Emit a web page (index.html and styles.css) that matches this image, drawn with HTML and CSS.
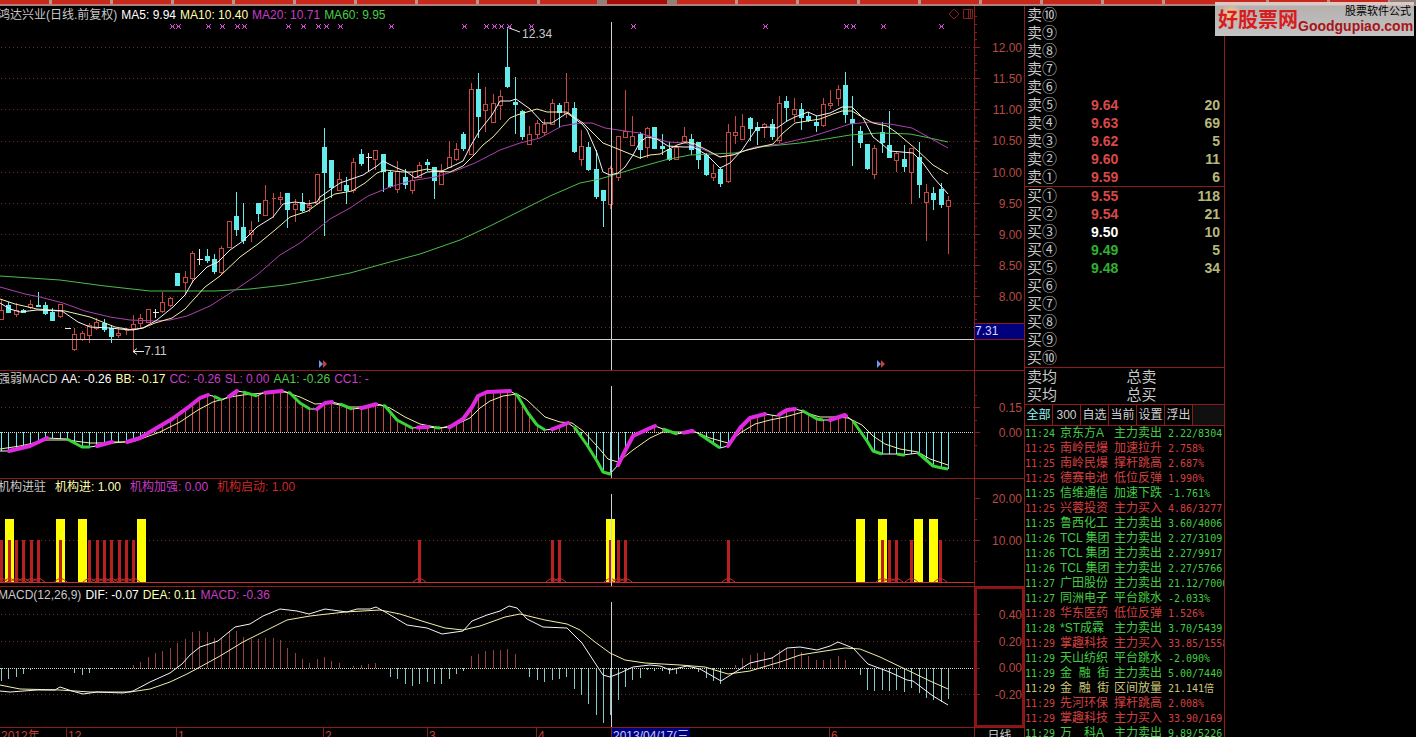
FILE: index.html
```html
<!DOCTYPE html>
<html lang="zh-CN">
<head>
<meta charset="utf-8">
<title>鸿达兴业 日线</title>
<link rel="stylesheet" href="styles.css">
</head>
<body>
<div class="strip">
  <div class="strip-left"></div><div class="strip-active"></div><div class="strip-right"></div><div class="strip-far"></div>
</div>
<main class="workspace">
  <div class="charts">
    <section class="panel">
      <svg class="plot" id="candles" viewBox="0 6 974 364" preserveAspectRatio="none"></svg>
      <header class="legend legend-top">
        <span class="grey">鸿达兴业(日线.前复权)</span><span class="white">MA5: 9.94</span><span class="yellow">MA10: 10.40</span><span class="magenta">MA20: 10.71</span><span class="green">MA60: 9.95</span>
        <svg class="tools" width="24" height="12" viewBox="0 0 24 12"><path d="M5 1 10 6 5 11 0 6zM14.500 1.500h9v9h-9zM19.500 1.500v9M21.500 1.500v9"/></svg>
      </header>
      <span class="mark high">12.34</span>
      <span class="mark low">7.11</span>
    </section>
    <div class="axis">
      <svg class="plot" id="axis1" viewBox="974 6 50 364" preserveAspectRatio="none"></svg>
      <div class="ticks ticks-price"><span>12.00</span><span>11.50</span><span>11.00</span><span>10.50</span><span>10.00</span><span>9.50</span><span>9.00</span><span>8.50</span><span>8.00</span></div>
      <span class="cursor-price">7.31</span>
    </div>

    <section class="panel">
      <svg class="plot" id="strength" viewBox="0 371 974 107" preserveAspectRatio="none"></svg>
      <header class="legend"><span class="grey">强弱MACD</span><span class="white">AA: -0.26</span><span class="yellow">BB: -0.17</span><span class="magenta">CC: -0.26</span><span class="magenta">SL: 0.00</span><span class="green">AA1: -0.26</span><span class="magenta">CC1: -</span></header>
    </section>
    <div class="axis">
      <svg class="plot" id="axis2" viewBox="974 371 50 107" preserveAspectRatio="none"></svg>
      <div class="ticks ticks-strength"><span>0.15</span><span>0.00</span></div>
    </div>

    <section class="panel">
      <svg class="plot" id="inst" viewBox="0 479 974 107" preserveAspectRatio="none"></svg>
      <header class="legend legend-wide"><span class="grey">机构进驻</span><span class="yellow">机构进: 1.00</span><span class="magenta">机构加强: 0.00</span><span class="red">机构启动: 1.00</span></header>
    </section>
    <div class="axis">
      <svg class="plot" id="axis3" viewBox="974 479 50 107" preserveAspectRatio="none"></svg>
      <div class="ticks ticks-inst"><span>20.00</span><span>10.00</span></div>
    </div>

    <section class="panel">
      <svg class="plot" id="macd" viewBox="0 587 974 140" preserveAspectRatio="none"></svg>
      <header class="legend"><span class="grey">MACD(12,26,9)</span><span class="white">DIF: -0.07</span><span class="yellow">DEA: 0.11</span><span class="magenta">MACD: -0.36</span></header>
    </section>
    <div class="axis axis-selected">
      <svg class="plot" id="axis4" viewBox="974 587 50 140" preserveAspectRatio="none"></svg>
      <div class="ticks ticks-macd"><span>0.40</span><span>0.20</span><span>0.00</span><span>-0.20</span></div>
    </div>

    <div class="dates"><span>2012年</span><span>12</span><span>1</span><span>2</span><span>3</span><span>4</span><span class="cursor-date">2013/04/17(三</span><span class="rest"></span><span>6</span></div>
    <div class="period">日线</div>
  </div>

  <aside class="quotes">
    <table class="book" id="sell"></table>
    <table class="book" id="buy"></table>
    <table class="book avg"><tr><th>卖均</th><th>总卖</th></tr><tr><th>买均</th><th>总买</th></tr></table>
    <nav class="tabs"><button class="on">全部</button><button>300</button><button>自选</button><button>当前</button><button>设置</button><button>浮出</button></nav>
    <div class="feed-box"><table class="feed" id="feed"></table></div>
  </aside>
  <div class="blank"></div>
</main>
<div class="brand">
  <span class="brand-cn">好股票网</span>
  <span class="brand-side"><span class="brand-sub">股票软件公式</span><span class="brand-en">Goodgupiao.com</span></span>
</div>
<script src="charts.js"></script>
</body>
</html>
```

FILE: styles.css
```css
* { box-sizing: border-box; }
html, body { height: 100%; }
body {
  margin: 0;
  background: #000;
  color: #c8c8c8;
  font: 12px/16px "Liberation Sans", "Noto Sans CJK SC", sans-serif;
  display: flex;
  flex-direction: column;
  overflow: hidden;
  position: relative;
}

/* top strip */
.strip { height: 6px; flex: none; display: grid; grid-template-columns: 607fr 60fr 541fr 208fr; border-bottom: 2px solid #b08078; background: #8d8078; }
.strip-left { background: repeating-linear-gradient(90deg, #c8281c 0 49px, #b9958c 49px 52px, #c8281c 52px 61px); margin-right: 10px; }
.strip-active { background: #a80c08; }
.strip-right { margin-left: 10px; background: repeating-linear-gradient(90deg, #c8281c 0 58px, #b9958c 58px 61px); }
.strip-far { background: repeating-linear-gradient(90deg, #c8281c 0 58px, #b9958c 58px 61px); margin-right: 26px; }

.workspace { flex: 1; min-height: 0; display: grid; grid-template-columns: minmax(0, 1024fr) 201px minmax(0, 191fr); grid-template-rows: minmax(0, 1fr); }
.charts { display: grid; grid-template-columns: minmax(0, 1fr) 50px; grid-template-rows: minmax(0, 365fr) minmax(0, 108fr) minmax(0, 108fr) minmax(0, 141fr) 9px; }

.panel, .axis { display: grid; grid-template: minmax(0, 1fr) / minmax(0, 1fr); border-bottom: 1px solid #8c1c1c; position: relative; }
.axis { border-left: 1px solid #8c1c1c; }
.panel > .plot, .panel > .legend, .axis > .plot, .axis > .ticks { grid-area: 1 / 1; }
.plot { display: block; width: 100%; height: 100%; }
.axis > .plot { width: 50px; margin-left: -1px; }
.axis-selected { box-shadow: inset 0 0 0 2px #8c1414; }

.legend { display: flex; gap: 4px; height: 16px; margin-left: -2px; white-space: nowrap; overflow: hidden; }
.legend-top { margin-top: 1px; }
.legend-wide { gap: 9px; }
.tools { margin: 1px 1px 0 auto; fill: none; stroke: #8c1c1c; }

.grey { color: #c8c8c8; }
.white { color: #fff; }
.yellow { color: #ffffb0; }
.magenta { color: #c83cc8; }
.green { color: #4ccc4c; }
.red { color: #d02828; }

.mark { position: absolute; }
.high { left: 53.600%; top: 5.500%; }
.low { left: 14.800%; top: 92.600%; }

.ticks { display: flex; flex-direction: column; justify-content: space-between; align-items: flex-end; color: #b84a44; padding-right: 2px; }
.ticks-price { padding-top: 34px; padding-bottom: 65px; }
.ticks-strength { padding-top: 29px; padding-bottom: 37px; }
.ticks-inst { padding-top: 12px; padding-bottom: 37px; }
.ticks-macd { padding-top: 20px; padding-bottom: 24px; }
.cursor-price { position: absolute; left: 0; right: 0; top: 87%; height: 17px; background: #00007c; border: solid #8c1c1c; border-width: 1px 0; color: #d8d8ff; line-height: 15px; }

.dates { display: grid; grid-template-columns: 66fr 110fr 147fr 104fr 109fr 75fr 79fr 139fr 145fr; overflow: hidden; color: #c04038; white-space: nowrap; }
.dates span { border-left: 1px solid #8c1c1c; padding-left: 1px; }
.dates span:first-child, .dates .rest { border-left: 0; }
.dates .cursor-date { background: #00007c; color: #c8c8ff; overflow: hidden; }
.period { border-left: 1px solid #8c1c1c; text-align: center; overflow: hidden; }

/* order book */
.quotes { border-left: 1px solid #8c1c1c; border-right: 1px solid #8c1c1c; display: flex; flex-direction: column; min-height: 0; }
.book { width: 100%; border-collapse: collapse; table-layout: fixed; border-bottom: 1px solid #8c1c1c; flex: none; }
.book th, .book td { height: 18px; padding: 0; line-height: 18px; }
.book th { width: 66px; padding-left: 2px; font-size: 15px; font-weight: normal; text-align: left; }
.book td { font-size: 14px; font-weight: bold; }
.book .qty { text-align: right; color: #b8b87c; padding-right: 4px; }
.book .up { color: #d84848; }
.book .flat { color: #fff; }
.book .down { color: #30b030; }
.avg th { width: 50%; }

.tabs { display: flex; height: 21px; flex: none; border-bottom: 1px solid #8c1c1c; background: #101010; }
.tabs button { margin: 0; padding: 0 1px; width: 28px; border: 0; border-right: 1px solid #8c1c1c; background: #000; color: #d0d0d0; font: 12px/18px "Liberation Sans", "Noto Sans CJK SC", sans-serif; }
.tabs .on { color: #90f4f4; }

.feed-box { flex: 1; min-height: 0; overflow: hidden; }
.feed { border-collapse: collapse; table-layout: fixed; width: 199px; white-space: pre; }
.feed td { padding: 0; height: 15px; line-height: 15px; overflow: hidden; }
.feed .t { width: 35px; }
.feed .n { width: 54px; }
.feed .a { width: 54px; }
.feed .t, .feed .v { font-family: "DejaVu Sans Mono", "Noto Sans CJK SC", monospace; font-size: 10px; }
.feed .r { color: #d44040; }
.feed .g { color: #44cc44; }
.feed .y { color: #c8c87c; }

/* corner badge */
.brand { position: absolute; top: 2px; right: 2px; width: 199px; height: 34px; padding: 0 0 0 3px; display: flex; align-items: center; background: radial-gradient(circle at 16px 12px, #e8c090 0 4px, transparent 11px), linear-gradient(#dcc8c4 0 3px, #b4b0ae 4px, #c4c4c4); white-space: nowrap; }
.brand-cn { font: bold 20px/30px "Noto Sans CJK SC", sans-serif; color: #d81c20; }
.brand-side { display: flex; flex-direction: column; align-items: flex-end; }
.brand-sub { font-size: 11px; line-height: 14px; padding-right: 2px; color: #000; }
.brand-en { font: bold 14px/16px "Liberation Sans", sans-serif; color: #a81418; }

/* plot marks */
.plot * { fill: none; vector-effect: non-scaling-stroke; }
.plot .crisp { shape-rendering: crispEdges; }
.plot .grid { stroke: #6c2c18; stroke-dasharray: 1 3; }
.plot .zero { stroke: #d8d8c8; stroke-dasharray: 1 1; }
.plot .rise { stroke: #c84844; }
.plot .body-rise { stroke: #c84844; fill: #000; }
.plot .fall { stroke: #64ecec; }
.plot .body-fall { fill: #64ecec; stroke: none; }
.plot .doji { stroke: #e8e8e8; }
.plot .cross { stroke: #d0d0d0; }
.plot .l-white { stroke: #f4f4f4; }
.plot .l-yellow { stroke: #f0f0a8; }
.plot .l-magenta { stroke: #b040b0; }
.plot .l-green { stroke: #4cbc4c; }
.plot .strong { stroke: #e028e0; stroke-width: 4; stroke-linecap: round; stroke-linejoin: round; }
.plot .weak { stroke: #38d438; stroke-width: 3; stroke-linejoin: round; }
.plot .x { stroke: #d848d8; }
.plot .bar-y { fill: #ffff00; }
.plot .bar-r { fill: #b82020; }
.plot .hist-r { stroke: #984040; }
.plot .hist-c { stroke: #88c8c8; }
.plot .axis-line { stroke: #8c1c1c; }
.plot .base { stroke: #c83030; }
.plot .arrow-blue { fill: #6c98f0; }
.plot .arrow-red { fill: #c83c3c; }
```

FILE: charts.js
```js
const NS = 'http://www.w3.org/2000/svg';
const at = i => Math.floor(1.5 + 7.34 * i) + 0.5;
const byId = id => document.getElementById(id);
function add(svg, d, cls) {
  const p = document.createElementNS(NS, 'path');
  p.setAttribute('d', d);
  p.setAttribute('class', cls);
  svg.appendChild(p);
}
const nums = s => s.trim().split(/[\s,]+/).map(Number);
function pairs(s) {
  const n = nums(s), out = [];
  for (let i = 0; i < n.length; i += 2) out.push([n[i], n[i + 1]]);
  return out;
}
const path = pts => 'M' + pts.map(p => p.join(' ')).join('L');
const line = (svg, s, cls) => add(svg, path(pairs(s)), cls);
const grid = (svg, ys) => ys.forEach(y => add(svg, `M1 ${y}.5H974`, 'grid crisp'));

/* price panel: direction, high, body top, body bottom, low */
const bars = `u299 310 319 319;d302 305 312 312;u303 310 314 317;d309 310 312 312;u300 304 307 309;d292 305 306 306;d302 305 313 314;d308 312 320 320;u304 304 316 318;w328 328 328 329;u328 334 349 351;u331 333 339 341;u323 325 335 343;u318 322 328 330;d319 323 329 331;d325 328 336 342;u329 333 335 338;u328 330 330 335;u315 324 328 352;u314 318 323 329;u309 309 322 322;w309 312 313 318;u292 302 311 313;u297 298 305 307;d273 273 285 285;u271 277 282 295;u251 253 278 283;w249 259 259 265;d249 256 260 262;d254 259 271 273;u246 248 272 275;u221 221 247 247;d192 216 229 235;d203 227 240 243;u221 230 234 242;d203 203 213 221;u185 200 215 216;u193 198 198 218;u192 197 199 205;d193 193 209 227;u199 204 209 222;d193 202 210 211;u200 205 207 212;u174 174 203 205;d128 147 172 235;d160 160 187 197;u172 179 190 191;d177 185 190 203;u158 162 190 193;d149 154 163 165;w153 157 157 171;u150 150 159 170;d154 154 171 191;d171 172 186 187;u161 171 189 193;d169 177 184 188;u172 180 190 194;u162 165 177 178;d159 162 164 170;d167 167 180 198;u164 172 184 185;u141 157 167 168;u143 149 159 161;d132 134 148 150;u83 89 154 155;d73 89 116 137;u87 104 110 132;u94 103 122 122;u90 96 105 120;d27 67 86 87;d77 102 104 133;d110 111 136 139;u126 134 144 145;u120 123 134 138;u119 124 132 135;u99 103 124 125;d103 105 112 127;u73 102 113 118;d102 108 151 152;u130 146 159 166;d142 147 169 170;d150 169 196 198;d190 190 200 226;u166 168 204 209;u136 136 177 181;u90 131 137 138;u116 136 145 146;d132 134 149 158;u127 128 147 158;d127 127 148 148;d134 146 148 154;d142 149 159 160;u146 147 159 160;u127 136 141 143;d134 139 149 154;d142 142 159 168;d153 155 174 175;u164 173 177 181;d168 169 183 186;u124 132 181 183;u116 132 135 144;u114 126 139 140;d117 118 128 140;d122 127 130 144;u123 124 127 138;d119 124 136 139;u96 103 140 143;d96 101 107 121;u98 109 114 122;d103 109 117 129;d112 116 120 121;d116 122 125 131;u98 104 125 127;u90 103 105 109;u85 89 98 106;d72 85 114 122;d96 119 123 165;d126 131 142 147;d144 144 168 169;u145 148 174 179;d122 132 142 152;d111 145 157 157;u152 153 160 172;d145 159 166 171;u148 148 172 204;d142 157 184 197;u184 192 202 241;d187 193 199 209;d183 189 204 207;u196 200 206 254`.split(';');
const c = byId('candles');
grid(c, [47, 78, 109, 141, 172, 203, 234, 265, 296, 327]);
bars.forEach((s, i) => {
  const kind = s[0], [hi, top, bot, lo] = nums(s.slice(1)), x = at(i);
  if (kind === 'w') { add(c, `M${x} ${hi}V${lo}M${x - 3} ${top + 0.5}h6`, 'doji crisp'); return; }
  if (kind === 'u') {
    add(c, `M${x} ${hi}V${lo}`, 'rise crisp');
    add(c, `M${x - 2} ${top + 0.5}h4V${bot + 0.5}h-4z`, 'body-rise crisp');
  } else {
    add(c, `M${x} ${hi}V${lo + 1}`, 'fall crisp');
    add(c, `M${x - 2.5} ${top}h5V${bot + 1}h-5z`, 'body-fall crisp');
  }
});
line(c, '0,276 60,280 105,286 150,291 215,291 250,289 285,285 320,279 350,273 390,262 420,254 460,240 490,226 520,211 550,196 580,183 600,179 640,167 665,160 690,155 735,153 760,147 800,143 820,140 850,135 880,133 910,134 925,137 948,142', 'l-green');
line(c, '0,287 25,294 40,297 63,303 85,311 110,317 130,320 155,321 170,320 187,316 210,306 235,290 257,275 280,255 300,243 330,219 350,208 368,196 390,187 410,181 435,177 455,171 475,163 500,150 520,143 540,138 562,126 580,123 592,123 605,128 625,131 640,133 652,137 668,142 685,143 700,148 720,157 735,154 755,147 780,144 810,137 835,129 850,124 870,122 890,124 912,128 930,138 948,148', 'l-magenta');
line(c, '0,299 15,304 37,309 65,311 90,317 115,327 133,330 143,328 155,323 172,318 185,309 205,287 220,276 240,257 258,244 275,230 290,217 308,211 320,202 335,194 352,191 365,183 377,173 385,170 403,172 413,172 427,169 437,171 450,172 463,166 475,154 483,145 493,137 502,127 510,118 517,115 537,109 547,112 567,112 583,123 603,143 613,147 640,158 650,155 660,154 677,145 687,142 695,144 707,150 720,157 733,155 747,150 773,144 783,133 795,123 820,119 833,114 842,111 852,111 862,117 873,123 887,126 897,133 917,150 933,165 948,174', 'l-yellow');
line(c, '0,303 10,309 20,312 37,310 62,311 78,322 90,327 110,328 130,330 143,328 157,320 173,307 185,295 193,281 207,267 218,262 230,250 243,241 257,227 273,217 283,204 295,202 308,204 317,202 320,197 340,183 363,175 377,166 383,161 397,168 407,172 415,178 427,172 442,171 457,164 463,161 470,147 480,130 492,115 500,101 510,101 516,99 530,109 543,123 552,123 567,113 582,124 587,130 597,153 603,172 610,175 618,173 625,167 633,155 640,142 647,137 657,139 668,146 683,147 693,147 707,155 720,168 730,163 742,150 757,128 768,127 777,128 787,121 795,117 803,114 808,112 817,116 830,113 842,107 852,107 863,118 873,137 882,144 890,151 913,153 923,163 933,177 948,194', 'l-white');
nums('172 178 208 222 237 244 288 303 318 326 340 391 464 486 494 501 509 531 633 765 846 853 883 941')
  .forEach(x => add(c, `M${x - 2} 24l5 5m0-5l-5 5M${x - 1} 26.500h3`, 'x'));
add(c, 'M509 28l11 4M133 351.500h11m-7-3l-4 3 4 3', 'doji');
add(c, 'M0 339.500H974M611.500 22V370', 'cross crisp');
[319, 877].forEach(x => {
  add(c, `M${x} 360l4 4-4 4z`, 'arrow-blue');
  add(c, `M${x + 4} 360l4 4-4 4z`, 'arrow-red');
});

/* strength panel */
const s = byId('strength');
grid(s, [407]);
const aa = pairs('0,451 9,451 30,446 47,438 67,439 82,447 90,447 97,446 112,442 127,442 140,438 155,429 172,419 190,406 200,398 208,395 213,396 222,400 230,396 237,391 243,392 257,396 263,393 282,391 290,393 300,403 310,409 317,409 325,403 332,402 340,404 352,409 362,408 377,404 385,406 397,420 412,428 427,427 440,428 450,427 463,419 472,407 478,396 487,392 510,391 517,395 528,413 537,425 545,430 553,429 568,423 575,428 587,445 597,461 603,472 610,474 618,465 625,451 633,436 648,429 655,426 663,429 677,434 692,431 698,433 720,448 728,446 740,428 750,418 765,414 777,416 787,410 795,409 803,411 817,419 823,420 830,420 845,415 853,421 867,441 873,451 882,454 897,454 903,455 918,453 933,466 942,468 948,469');
function valueAt(x) {
  for (let i = 1; i < aa.length; i++) {
    const [x0, y0] = aa[i - 1], [x1, y1] = aa[i];
    if (x <= x1) return y0 + (y1 - y0) * (x - x0) / (x1 - x0);
  }
  return aa[aa.length - 1][1];
}
function slice(a, b) {
  return [[a, valueAt(a)], ...aa.filter(p => p[0] > a && p[0] < b), [b, valueAt(b)]];
}
for (let i = 0; i < 130; i++) {
  const y = valueAt(at(i));
  add(s, `M${at(i)} 432V${y}`, (y < 432 ? 'rise' : 'fall') + ' crisp');
}
add(s, 'M0 432.500H974', 'zero crisp');
add(s, path(aa), 'l-white');
line(s, '0,449 20,446 47,440 67,440 90,443 112,443 135,441 160,432 180,422 198,410 213,402 230,397 243,395 263,393 285,392 300,397 315,404 330,403 350,407 365,407 380,405 390,408 405,417 420,424 440,428 455,425 470,418 480,408 490,401 503,396 517,394 527,400 545,417 560,422 572,423 583,431 597,446 608,459 618,462 633,450 650,438 663,432 680,432 695,432 710,438 728,443 740,433 755,424 770,420 785,417 803,412 820,417 835,417 848,418 862,425 873,436 885,444 900,449 918,452 930,459 948,465', 'l-yellow');
pairs('67,90 214,222 243,257 288,310 340,352 383,412 434,440 515,545 574,611 663,677 699,720 802,823 853,882 897,905 918,948').forEach(r => add(s, path(slice(...r)), 'weak'));
pairs('9,47 97,112 127,208 229,237 265,282 317,332 361,376 418,428 449,510 552,568 618,655 684,693 728,765 779,795 830,846').forEach(r => add(s, path(slice(...r)), 'strong'));
add(s, 'M611.500 386V478', 'cross crisp');

/* institution panel */
const n = byId('inst');
grid(n, [540]);
nums('5 56 78 137 606 856 878 914 929').forEach(x => add(n, `M${x} 519h9v63h-9z`, 'bar-y crisp'));
nums('0 8 15 22 30 37 59 88 96 103 110 118 125 132 418 551 558 609 617 624 727 881 888 895 910 939').forEach(x => {
  add(n, `M${x} 540h3v42h-3z`, 'bar-r crisp');
  add(n, `M${x - 5} 582l4-3h5l4 3`, 'base');
});
add(n, 'M0 582.500H974', 'base crisp');
add(n, 'M611.500 494V586', 'cross crisp');

/* MACD panel: signed bar height per day */
const m = byId('macd');
grid(m, [614, 641, 694]);
nums(`-13 -11 -9 -6 -2 0 0 -1 0 0 -5 -7 -5 0 0 -1 0 0 3 6 11 15 17 20 25 29 36 37 36 30 30 37 37 31 29 29 30 30 28 20 15 9 5 9 11
7 5 0 2 3 4 5 0 -9 -11 -16 -18 -16 -14 -16 -16 -11 -6 -3 12 14 17 18 18 19 14 0 -9 -12 -14 -12 -11 -9 -21 -27 -36 -47 -55 -47 -32 -19 -12 -10
-2 -3 -3 -6 -6 0 0 -4 -10 -13 -16 0 3 10 13 15 16 11 18 20 19 16 12 8 8 9 12 8 0 -7 -22 -23 -22 -23 -22 -24 -20 -25 -30 -32 -34 -31`)
  .forEach((h, i) => { if (h) add(m, `M${at(i)} 668V${668 - h}`, (h > 0 ? 'hist-r' : 'hist-c') + ' crisp'); });
add(m, 'M0 668.500H974', 'zero crisp');
line(m, '0,685 20,689 60,690 90,692 130,692 150,689 170,682 187,674 200,667 220,656 243,642 265,631 287,620 310,616 345,612 380,610 400,614 425,622 445,628 463,630 480,626 505,617 520,614 545,620 567,624 580,630 595,642 610,653 625,660 645,663 680,665 705,667 728,674 750,671 780,662 800,655 825,651 845,648 860,649 880,657 905,669 930,681 948,689', 'l-yellow');
line(m, '0,691 10,692 37,690 55,690 60,687 72,691 83,694 97,692 123,693 133,691 150,682 170,673 182,664 190,655 200,647 218,641 235,627 250,624 263,616 280,609 297,611 309,614 325,609 347,612 357,609 370,609 376,607 387,613 407,625 427,628 442,634 463,631 472,621 487,615 500,611 509,606 517,608 527,619 543,627 567,628 582,643 597,666 603,675 610,677 620,673 633,667 650,665 660,666 670,670 687,666 700,669 721,681 737,671 750,663 772,658 787,648 800,647 817,650 830,646 838,642 853,648 868,664 887,671 907,680 913,681 933,696 948,705', 'l-white');
add(m, 'M611.500 602V727', 'cross crisp');

/* scale ticks */
const scale = (id, major, minor) => {
  major.forEach(y => add(byId(id), `M974 ${y}.5h6`, 'axis-line crisp'));
  minor.forEach(y => add(byId(id), `M974 ${y}.5h3`, 'axis-line crisp'));
};
scale('axis1', [47, 78, 109, 141, 172, 203, 234, 265, 296], Array.from({ length: 41 }, (_, i) => Math.round(16 + i * 7.78)));
scale('axis2', [407, 432], [395, 420, 445]);
scale('axis3', [498, 540], [519, 561]);
scale('axis4', [614, 641, 668, 694], [628, 655, 681]);

/* order book */
const row = ([label, price, qty, cls]) =>
  `<tr><th scope="row">${label}</th><td class="${cls || ''}">${price || ''}</td><td class="qty">${qty || ''}</td></tr>`;
byId('sell').innerHTML = [['卖⑩'], ['卖⑨'], ['卖⑧'], ['卖⑦'], ['卖⑥'],
  ['卖⑤', '9.64', 20, 'up'], ['卖④', '9.63', 69, 'up'], ['卖③', '9.62', 5, 'up'], ['卖②', '9.60', 11, 'up'], ['卖①', '9.59', 6, 'up']].map(row).join('');
byId('buy').innerHTML = [['买①', '9.55', 118, 'up'], ['买②', '9.54', 21, 'up'], ['买③', '9.50', 10, 'flat'], ['买④', '9.49', 5, 'down'], ['买⑤', '9.48', 34, 'down'],
  ['买⑥'], ['买⑦'], ['买⑧'], ['买⑨'], ['买⑩']].map(row).join('');

/* alert feed */
byId('feed').innerHTML = `g|11:24|京东方A|主力卖出|2.22/8304
r|11:25|南岭民爆|加速拉升|2.758%
r|11:25|南岭民爆|撑杆跳高|2.687%
r|11:25|德赛电池|低位反弹|1.990%
g|11:25|信维通信|加速下跌|-1.761%
r|11:25|兴蓉投资|主力买入|4.86/3277
g|11:25|鲁西化工|主力卖出|3.60/4006
g|11:26|TCL 集团|主力卖出|2.27/3109
g|11:26|TCL 集团|主力卖出|2.27/9917
g|11:26|TCL 集团|主力卖出|2.27/5766
g|11:27|广田股份|主力卖出|21.12/7000
g|11:27|同洲电子|平台跳水|-2.033%
r|11:28|华东医药|低位反弹|1.526%
g|11:28|*ST成霖|主力卖出|3.70/5439
r|11:29|掌趣科技|主力买入|33.85/1558
g|11:29|天山纺织|平台跳水|-2.090%
g|11:29|金  融  街|主力卖出|5.00/7440
y|11:29|金  融  街|区间放量|21.141倍
r|11:29|先河环保|撑杆跳高|2.008%
r|11:29|掌趣科技|主力买入|33.90/169
g|11:29|万　科A|主力卖出|9.89/5226`.split('\n').map(l => {
  const [k, t, name, act, v] = l.split('|');
  return `<tr class="${k}"><td class="t">${t}</td><td class="n">${name}</td><td class="a">${act}</td><td class="v">${v}</td></tr>`;
}).join('');
```
